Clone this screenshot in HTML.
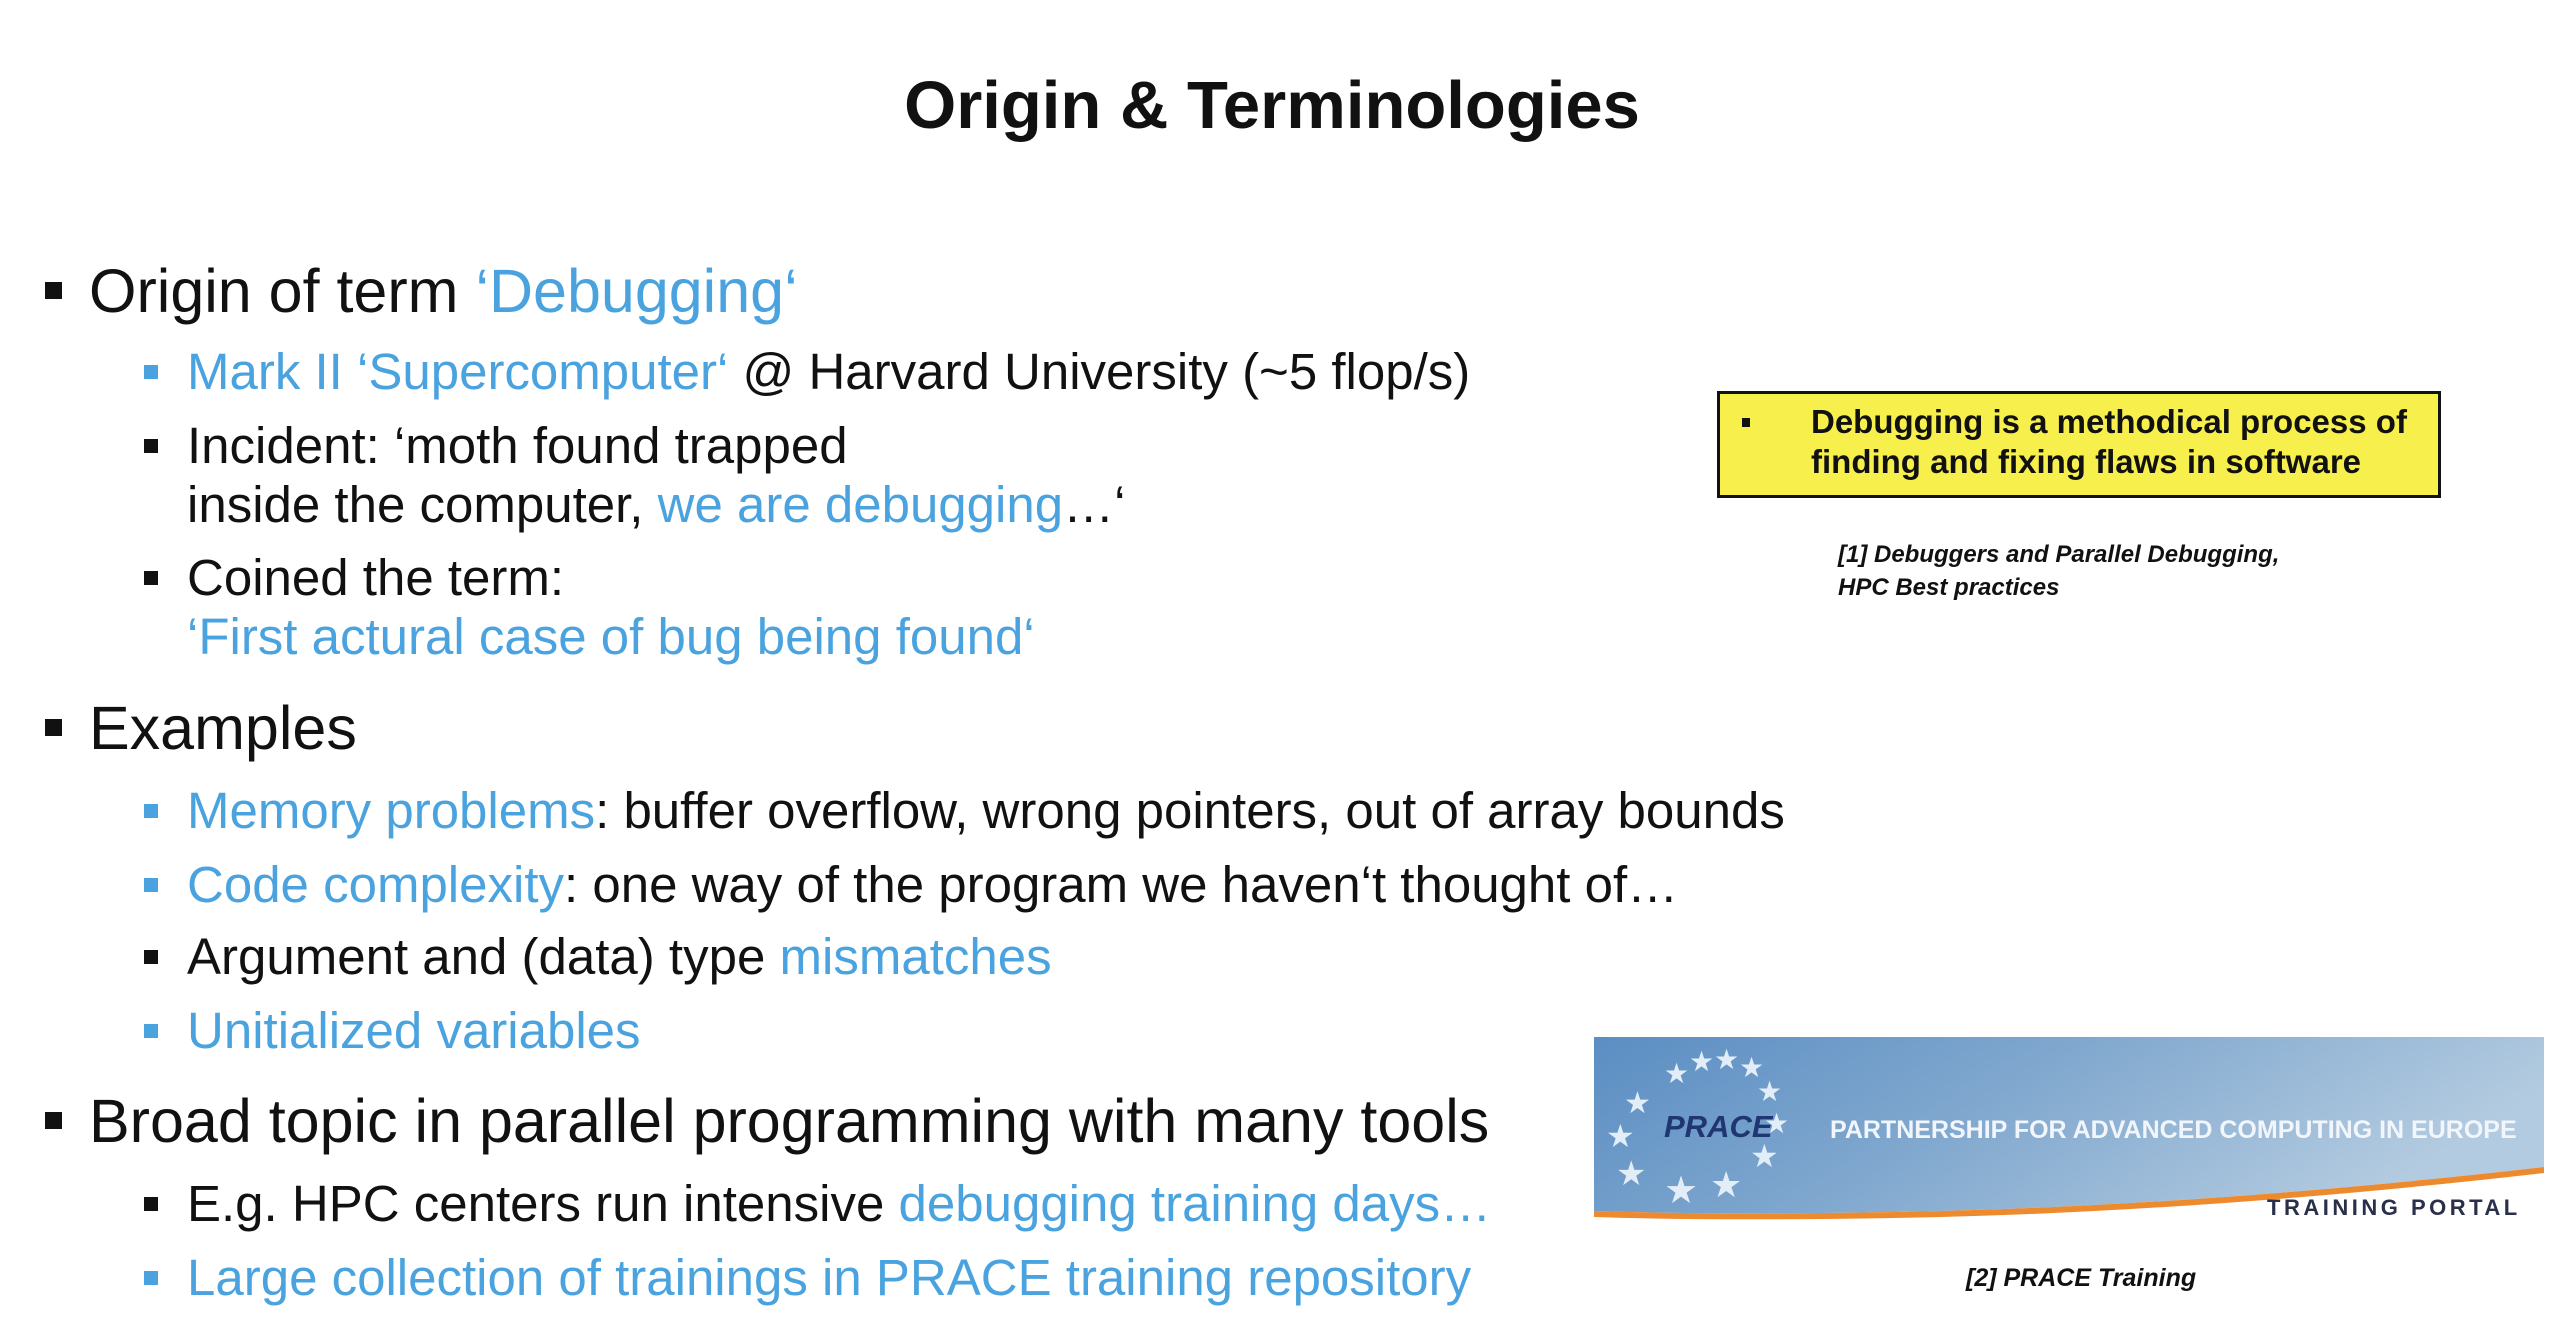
<!DOCTYPE html>
<html><head><meta charset="utf-8"><style>
body{margin:0;width:2576px;height:1342px;background:#fff;position:relative;overflow:hidden;font-family:"Liberation Sans",sans-serif;color:#111}
.t{position:absolute;white-space:nowrap;line-height:1}
.b{color:#4aa3df}
.l1{font-size:61px;left:89px}
.l2{font-size:51px;left:187px}
.sq{position:absolute;background:#111}
.sb{position:absolute;background:#4aa3df}
</style></head><body>
<div class="t" style="left:0;width:2544px;text-align:center;top:72px;font-size:67px;font-weight:bold">Origin &amp; Terminologies</div>

<div class="sq" style="left:45px;top:282px;width:17px;height:17px"></div>
<div class="t l1" style="top:261px">Origin of term <span class="b">‘Debugging‘</span></div>

<div class="sb" style="left:144px;top:365px;width:14px;height:14px"></div>
<div class="t l2" style="top:346px"><span class="b">Mark II ‘Supercomputer‘</span> @ Harvard University (~5 flop/s)</div>
<div class="sq" style="left:144px;top:439px;width:14px;height:14px"></div>
<div class="t l2" style="top:420px">Incident: ‘moth found trapped</div>
<div class="t l2" style="top:479px">inside the computer, <span class="b">we are debugging</span>…‘</div>
<div class="sq" style="left:144px;top:571px;width:14px;height:14px"></div>
<div class="t l2" style="top:552px">Coined the term:</div>
<div class="t l2 b" style="top:611px">‘First actural case of bug being found‘</div>

<div class="sq" style="left:45px;top:719px;width:17px;height:17px"></div>
<div class="t l1" style="top:698px">Examples</div>
<div class="sb" style="left:144px;top:804px;width:14px;height:14px"></div>
<div class="t l2" style="top:785px"><span class="b">Memory problems</span>: buffer overflow, wrong pointers, out of array bounds</div>
<div class="sb" style="left:144px;top:878px;width:14px;height:14px"></div>
<div class="t l2" style="top:859px"><span class="b">Code complexity</span>: one way of the program we haven‘t thought of…</div>
<div class="sq" style="left:144px;top:950px;width:14px;height:14px"></div>
<div class="t l2" style="top:931px">Argument and (data) type <span class="b">mismatches</span></div>
<div class="sb" style="left:144px;top:1024px;width:14px;height:14px"></div>
<div class="t l2 b" style="top:1005px">Unitialized variables</div>

<div class="sq" style="left:45px;top:1112px;width:17px;height:17px"></div>
<div class="t l1" style="top:1091px">Broad topic in parallel programming with many tools</div>
<div class="sq" style="left:144px;top:1197px;width:14px;height:14px"></div>
<div class="t l2" style="top:1178px">E.g. HPC centers run intensive <span class="b">debugging training days…</span></div>
<div class="sb" style="left:144px;top:1271px;width:14px;height:14px"></div>
<div class="t l2 b" style="top:1252px">Large collection of trainings in PRACE training repository</div>

<div style="position:absolute;left:1717px;top:391px;width:718px;height:101px;background:#f7ef4c;border:3px solid #111"></div>
<div class="sq" style="left:1742px;top:418px;width:8px;height:9px"></div>
<div class="t" style="left:1811px;top:402px;font-size:33px;font-weight:bold;line-height:40px">Debugging is a methodical process of<br>finding and fixing flaws in software</div>
<div class="t" style="left:1838px;top:538px;font-size:24px;font-weight:bold;font-style:italic;line-height:33px">[1] Debuggers and Parallel Debugging,<br>HPC Best practices</div>

<svg style="position:absolute;left:1594px;top:1037px" width="950" height="185" viewBox="0 0 950 185">
<defs><linearGradient id="g" x1="0" y1="0" x2="1" y2="0.3"><stop offset="0" stop-color="#5b8ec3"/><stop offset="0.5" stop-color="#82a9cf"/><stop offset="1" stop-color="#b3cbe0"/></linearGradient></defs>
<path d="M0 0H950V130Q600 170 300 175Q120 178 0 174Z" fill="url(#g)"/>
<path d="M0 174Q120 178 300 175Q600 170 950 130V136Q600 176 300 181Q120 184 0 180Z" fill="#ee8a2e"/>
<text x="70" y="100" font-family="Liberation Sans" font-weight="bold" font-style="italic" font-size="31" fill="#1f3673">PRACE</text>
<g fill="#e3edf8" font-family="Liberation Sans" font-size="28">
<text x="70" y="46">★</text><text x="95" y="34">★</text><text x="120" y="32">★</text><text x="145" y="40">★</text><text x="163" y="64">★</text><text x="170" y="96">★</text><text x="156" y="130" font-size="32">★</text><text x="116" y="160" font-size="36">★</text><text x="70" y="166" font-size="38">★</text><text x="22" y="148" font-size="34">★</text><text x="12" y="110" font-size="32">★</text><text x="30" y="76" font-size="30">★</text>
</g>
<text x="236" y="101" font-family="Liberation Sans" font-weight="bold" font-size="25" fill="#f2f6fb">PARTNERSHIP FOR ADVANCED COMPUTING IN EUROPE</text>
</svg>
<div class="t" style="left:2267px;top:1197px;font-size:22px;font-weight:bold;color:#2a2f4a;letter-spacing:3.5px">TRAINING PORTAL</div>
<div class="t" style="left:1966px;top:1266px;font-size:25px;font-weight:bold;font-style:italic">[2] PRACE Training</div>
</body></html>
